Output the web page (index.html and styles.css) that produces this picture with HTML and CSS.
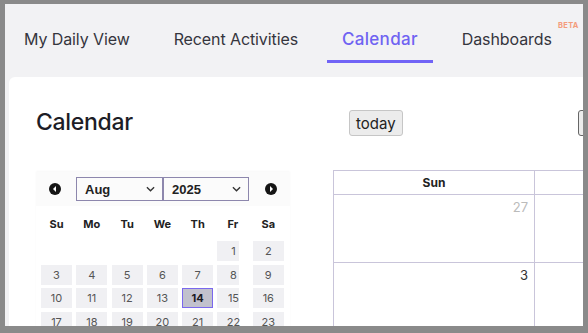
FILE: index.html
```html
<!DOCTYPE html>
<html>
<head>
  <link rel="stylesheet" href="styles.css">
</head>
<body>
  <div class="frame">
    <div class="tabs">
      <div class="tab">My Daily View</div>
      <div class="tab">Recent Activities</div>
      <div class="tab active">Calendar</div>
      <div class="tab">Dashboards<span class="beta">BETA</span></div>
    </div>

    <div class="card">
      <div class="side">
        <h1 class="page-title">Calendar</h1>

        <div class="mini">
          <div class="mini-head">
            <span class="nav-dot prev"></span>
            <div class="select month">Aug<svg viewBox="0 0 10 6"><path d="M1 1l4 4 4-4" fill="none" stroke="#333" stroke-width="1.5"/></svg></div>
            <div class="select year">2025<svg viewBox="0 0 10 6"><path d="M1 1l4 4 4-4" fill="none" stroke="#333" stroke-width="1.5"/></svg></div>
            <span class="nav-dot next"></span>
          </div>

          <div class="dow">
            <span>Su</span><span>Mo</span><span>Tu</span><span>We</span><span>Th</span><span>Fr</span><span>Sa</span>
          </div>

          <div class="days">
            <span class="empty"></span><span class="empty"></span><span class="empty"></span><span class="empty"></span><span class="empty"></span>
            <span class="day fri">1</span><span class="day">2</span>
            <span class="day">3</span><span class="day">4</span><span class="day">5</span><span class="day">6</span><span class="day">7</span><span class="day fri">8</span><span class="day">9</span>
            <span class="day">10</span><span class="day">11</span><span class="day">12</span><span class="day">13</span><span class="day today">14</span><span class="day fri">15</span><span class="day">16</span>
            <span class="day">17</span><span class="day">18</span><span class="day">19</span><span class="day">20</span><span class="day">21</span><span class="day fri">22</span><span class="day">23</span>
          </div>
        </div>
      </div>

      <div class="main">
        <div class="toolbar">
          <button class="btn">today</button>
          <button class="btn nav"></button>
        </div>

        <table class="month-grid">
          <thead>
            <tr><th>Sun</th><th></th></tr>
          </thead>
          <tbody>
            <tr><td class="other">27</td><td></td></tr>
            <tr><td>3</td><td></td></tr>
          </tbody>
        </table>
      </div>
    </div>
  </div>
</body>
</html>
```

FILE: styles.css
```css
* {
  margin: 0;
  padding: 0;
  box-sizing: border-box;
}

body {
  background: #8a8a8a;
  font-family: Inter, 'Noto Sans', sans-serif;
  color: #2b2b33;
}

.frame {
  width: 588px;
  height: 333px;
  border-style: solid;
  border-color: #8a8a8a;
  border-width: 4px 5px 7px 5px;
  background: #f2f2f4;
  overflow: hidden;
}

/* top navigation */
.tabs {
  display: flex;
  gap: 14px;
  padding: 0 4px;
  margin-bottom: 14px;
}

.tab {
  position: relative;
  padding: 24px 15px 10px;
  line-height: 22px;
  font-size: 16px;
  letter-spacing: -0.1px;
  color: #35353d;
  border-bottom: 3px solid transparent;
  white-space: nowrap;
}

.tab.active {
  color: #6f63f2;
  font-size: 17px;
  font-weight: 500;
  letter-spacing: 0.3px;
  border-bottom-color: #7164f6;
}

.beta {
  position: absolute;
  top: 17px;
  right: -12px;
  line-height: 10px;
  font-size: 7.5px;
  font-weight: 700;
  color: #f49c7c;
  letter-spacing: 0.3px;
}

/* white panel */
.card {
  display: flex;
  gap: 43px;
  margin-left: 4px;
  width: 700px;
  height: 300px;
  background: #fff;
  border-radius: 6px 0 0 0;
  padding: 30px 0 0 27px;
}

.side {
  width: 254px;
  flex-shrink: 0;
}

.page-title {
  font-size: 23px;
  line-height: 30px;
  font-weight: 500;
  color: #1d1d26;
  letter-spacing: -0.3px;
}

/* mini date picker */
.mini {
  margin-top: 35px;
  box-shadow: 0 -1px 2px rgba(0, 0, 0, 0.03);
}

.mini-head {
  display: flex;
  align-items: center;
  height: 34px;
  padding-left: 13px;
  background: #fbfbfb;
}

.nav-dot {
  position: relative;
  width: 12px;
  height: 12px;
  border-radius: 50%;
  background: #151515;
}

.nav-dot::after {
  content: '';
  position: absolute;
  top: 3px;
  border-style: solid;
  border-color: transparent;
  border-width: 3px;
}

.prev::after {
  left: 1px;
  border-right-color: #fff;
}

.next::after {
  left: 5px;
  border-left-color: #fff;
}

.select {
  display: flex;
  align-items: center;
  justify-content: space-between;
  height: 24px;
  padding: 0 7px 0 8px;
  border: 1px solid #8d87ad;
  font-family: 'Liberation Sans', Arial, sans-serif;
  font-weight: 700;
  font-size: 13px;
  color: #222;
}

.select svg {
  width: 9px;
  height: 6px;
}

.month {
  width: 87px;
  margin-left: 15px;
}

.year {
  width: 86px;
}

.next {
  margin-left: 16px;
}

.dow,
.days {
  display: grid;
  grid-template-columns: repeat(7, 31px);
  column-gap: 4.3px;
  padding-left: 5px;
}

.dow {
  height: 20px;
  margin: 8px 0 7px;
  align-items: center;
  font-size: 11px;
  font-weight: 700;
  color: #222;
  text-align: center;
}

.days {
  grid-auto-rows: 20px;
  row-gap: 3.5px;
}

.day {
  display: flex;
  align-items: center;
  justify-content: center;
  background: #f0f0f3;
  font-size: 11px;
  color: #555;
}

.day.fri {
  width: 32px;
  background: linear-gradient(#f0f0f3, #f0f0f3) left / 22px 100% no-repeat;
}

.day.today {
  background: #c1c1cd;
  border: 1px solid #7a68ee;
  font-weight: 700;
  color: #1b1b24;
}

/* main calendar */
.main {
  flex: 1;
}

.toolbar {
  display: flex;
  align-items: center;
  height: 26px;
  margin-top: 3px;
  padding-left: 16px;
}

.btn {
  height: 26px;
  padding: 0 6px;
  background: #ececec;
  border: 1px solid #c6c6c6;
  border-radius: 3px;
  font-family: Inter, sans-serif;
  font-size: 15px;
  color: #222;
}

.btn.nav {
  width: 30px;
  margin-left: 175px;
  border-color: #666;
}

.month-grid {
  margin-top: 34px;
  border-collapse: collapse;
  table-layout: fixed;
  width: 402px;
}

.month-grid th,
.month-grid td {
  border: 1px solid #c9c5da;
  width: 201px;
}

.month-grid th {
  height: 24px;
  font-size: 12px;
  font-weight: 700;
  color: #222;
}

.month-grid td {
  height: 68px;
  vertical-align: top;
  text-align: right;
  padding: 4px 6px 0 0;
  font-size: 13px;
  color: #333;
}

.month-grid td.other {
  color: #bbb;
}
```
